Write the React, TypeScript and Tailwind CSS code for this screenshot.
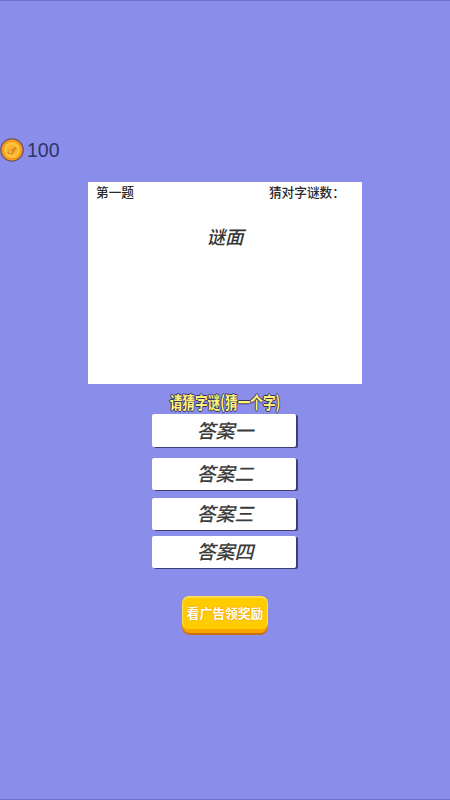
const font = "[font-family:'Noto_Sans_CJK_SC','Liberation_Sans',sans-serif]";

function Answer({ label, className }: { label: string; className: string }) {
  return (
    <div className={`w-[144px] bg-white rounded-[2px] flex items-center justify-center italic font-medium text-[19px] leading-none text-[#3c3c3c] shadow-[2px_1px_0_#3b3f78] ${className}`}>
      <span className="pb-[3px] pl-[2px]">{label}</span>
    </div>
  );
}

function Coin() {
  return (
    <svg width="24" height="24" viewBox="0 0 24 24" className="shrink-0">
      <circle cx="12" cy="12" r="11.8" fill="#6b5560" />
      <circle cx="12" cy="12" r="10.6" fill="#f59a1c" />
      <circle cx="12" cy="12" r="8" fill="#fcc640" />
      <circle cx="12" cy="12" r="5.8" fill="#f9b530" />
      <path d="M7.5 15c1.2 1.6 4 1.8 5.5.2l3.6-5.2-1.8-1.2-2.4 2.8c-1.8-.7-4.5.9-4.9 3.4z" fill="#e08420" />
      <circle cx="10.3" cy="13.8" r="1.4" fill="#fcc640" />
    </svg>
  );
}

export default function App() {
  return (
    <div className={`w-[450px] h-[800px] bg-[#8a8eea] border-y border-[#6d70c4] flex flex-col ${font}`}>
      <div className="flex items-center pt-[137px] h-[161px]">
        <Coin />
        <span className="ml-[3px] pt-[1px] text-[19.5px] leading-none text-[#2f3468] [font-family:'Liberation_Sans',sans-serif]">100</span>
      </div>
      <div className="mt-[20px] ml-[88px] w-[274px] h-[202px] bg-white flex flex-col">
        <div className="flex justify-between pl-[8px] pr-[17px] pt-[1px] font-medium text-[12.7px] leading-[17px] text-[#2a2a2a]">
          <span>第一题</span>
          <span>猜对字谜数：</span>
        </div>
        <div className="mt-[24px] text-center italic font-medium text-[18.5px] leading-[24px] text-[#333]">谜面</div>
      </div>
      <div className="mt-[5px] h-[23px] flex items-center justify-center font-bold text-[16px] leading-none text-[#fff27a] scale-x-[0.79] scale-y-[1.1] [text-shadow:-1px_0_0_#34315c,1px_0_0_#34315c,0_-1px_0_#34315c,0_1px_0_#34315c]">
        请猜字谜(猜一个字)
      </div>
      <div className="flex flex-col items-start pl-[152px] mt-[2px]">
        <Answer label="答案一" className="h-[33px]" />
        <Answer label="答案二" className="h-[32px] mt-[11px]" />
        <Answer label="答案三" className="h-[32px] mt-[8px]" />
        <Answer label="答案四" className="h-[32px] mt-[6px]" />
      </div>
      <div className="mt-[28px] ml-[182px] w-[86px] h-[39px] rounded-[8px] bg-[#c4710f] pb-[2px]">
        <div className="h-full rounded-[8px] bg-[#f9a602] pb-[4px]">
          <div className="h-full rounded-[7px] bg-[#ffcc00] border-t-[2px] border-x border-[#ffdc4a] flex items-center justify-center pb-[1px]">
            <div className="text-[12.8px] font-bold leading-none whitespace-nowrap text-white [text-shadow:0_0_2px_#f08c00]">看广告领奖励</div>
          </div>
        </div>
      </div>
    </div>
  );
}
